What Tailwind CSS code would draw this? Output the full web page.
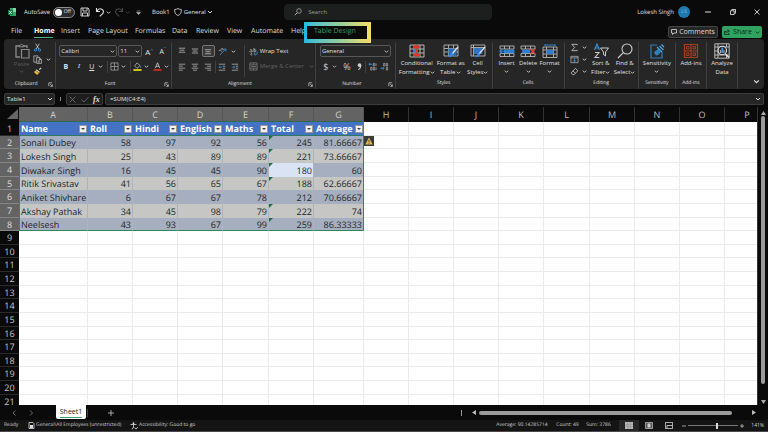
<!DOCTYPE html>
<html lang="en">

<head>
    <meta charset="UTF-8" />
    <meta name="viewport" content="width=device-width, initial-scale=1.0" />
    <title>Book1 - Excel</title>
    <script src="https://cdn.jsdelivr.net/npm/@tailwindcss/browser@4"></script>
</head>

<body class="bg-[#0a0a0a] text-[#e0e0e0] font-['Open_Sans','Noto_Sans',sans-serif] [text-rendering:geometricPrecision] text-[6px] leading-[9px] h-screen flex flex-col overflow-hidden">

    <!-- Icon sprite -->
    <svg class="hidden">
        <symbol id="caret" viewBox="0 0 6 6"><path d="M1 2l2 2 2-2" fill="none" stroke="currentColor" stroke-width="1" /></symbol>
        <symbol id="launcher" viewBox="0 0 6 6"><path d="M1 5V1h4M2.600 2.600l2.400 2.400M5.200 2.800v2.400H2.800" fill="none" stroke="currentColor" stroke-width=".8" /></symbol>
        <symbol id="save" viewBox="0 0 10 10"><path d="M1 1h7l1 1v7H1zM3 1v3h4V1M2.500 9V6h5v3" fill="none" stroke="currentColor" stroke-width=".9" /></symbol>
        <symbol id="undo" viewBox="0 0 10 10"><path d="M1.500 1v3.500H5M1.800 4.200C3 2 5 1.300 6.800 2.200c2 1 2 3.300.6 4.700L4.800 9.300" fill="none" stroke="currentColor" stroke-width="1.100" /></symbol>
        <symbol id="paste" viewBox="0 0 16 16"><path d="M6 14H2V3h3M10 3h3v2" fill="none" stroke="#8a8a8a" stroke-width="1.300" /><path d="M5 3.800V2.500h1.200C6.500.8 8.500.8 8.800 2.500H10v1.300z" fill="none" stroke="#8a8a8a" /><path d="M7.500 6.500h7.500V15H7.500z" fill="none" stroke="#8a8a8a" stroke-width="1.200" /></symbol>
        <symbol id="cut" viewBox="0 0 10 10"><path d="M3 .8l3.600 6M7 .8l-3.600 6" stroke="#d0d0d0" stroke-width=".9" /><circle cx="2.800" cy="7.800" r="1.300" fill="none" stroke="#3b93d8" /><circle cx="7.200" cy="7.800" r="1.300" fill="none" stroke="#3b93d8" /></symbol>
        <symbol id="copy" viewBox="0 0 10 10"><path d="M3.500 8H1V1h4.500v1M4 2.800h3L9.300 5v4.300H4zM7 2.800V5h2.300M5.300 6.500h2.500M5.300 7.800h2.500" fill="none" stroke="#c8c8c8" stroke-width=".8" /></symbol>
        <symbol id="painter" viewBox="0 0 10 10"><path d="M7 3l2-2" stroke="#ddd" stroke-width="1.300" /><path d="M3.500 3l3.800 3" stroke="#ddd" stroke-width="1.300" /><path d="M3 3.800L1 5.500 4.500 9l2.300-2.300z" fill="#e8b339" /></symbol>
        <symbol id="borders" viewBox="0 0 10 10"><path d="M1 1h8v8H1zM5 1v8M1 5h8" fill="none" stroke="#aaa" stroke-width=".8" /></symbol>
        <symbol id="bucket" viewBox="0 0 10 10"><path d="M4.500 1L7.800 4 4.500 7 1.800 4.300z" fill="none" stroke="#ccc" stroke-width=".8" /><path d="M8.500 4.300v2" stroke="#3b93d8" /><path d="M.500 8h9v1.800h-9z" fill="#f5ea15" /></symbol>
        <symbol id="fontcolor" viewBox="0 0 10 10"><path d="M2.500 6.800L5 .8l2.500 6M3.300 4.800h3.400" fill="none" stroke="#ccc" stroke-width=".9" /><path d="M.500 8h9v1.800h-9z" fill="#e02a1c" /></symbol>
        <symbol id="top" viewBox="0 0 10 10"><path d="M1 1.500h8M2 4h6M1 6.500h8" stroke="#bdbdbd" /></symbol>
        <symbol id="middle" viewBox="0 0 10 10"><path d="M1 2.500h8M2 5h6M1 7.500h8" stroke="#bdbdbd" /></symbol>
        <symbol id="bottom" viewBox="0 0 10 10"><path d="M1 3.500h8M2 6h6M1 8.500h8" stroke="#bdbdbd" /></symbol>
        <symbol id="left" viewBox="0 0 10 10"><path d="M1 1.500h8M1 4h5M1 6.500h8M1 9h5" stroke="#bdbdbd" stroke-width=".9" /></symbol>
        <symbol id="center" viewBox="0 0 10 10"><path d="M1 1.500h8M2.500 4h5M1 6.500h8M2.500 9h5" stroke="#bdbdbd" stroke-width=".9" /></symbol>
        <symbol id="right" viewBox="0 0 10 10"><path d="M1 1.500h8M4 4h5M1 6.500h8M4 9h5" stroke="#bdbdbd" stroke-width=".9" /></symbol>
        <symbol id="orient" viewBox="0 0 10 10"><path d="M2 9l6.500-6.500M8.800 5V2.200H6" fill="none" stroke="#3b93d8" stroke-width=".9" /><path d="M1 4.500c1-2 2.500-1 3 .5M3.500 2.500c1-1.500 2.500-.5 2 1" fill="none" stroke="#ccc" stroke-width=".9" /></symbol>
        <symbol id="outdent" viewBox="0 0 10 10"><path d="M1 1.500h8M6 4h3M6 6.500h3M1 9h8" stroke="#bdbdbd" stroke-width=".9" /><path d="M5 5.200H1.300M2.800 3.700L1.300 5.200l1.500 1.500" fill="none" stroke="#3b93d8" /></symbol>
        <symbol id="indent" viewBox="0 0 10 10"><path d="M1 1.500h8M6 4h3M6 6.500h3M1 9h8" stroke="#bdbdbd" stroke-width=".9" /><path d="M1 5.200h3.700M3.200 3.700l1.500 1.500-1.500 1.500" fill="none" stroke="#3b93d8" /></symbol>
        <symbol id="wrap" viewBox="0 0 10 10"><path d="M1 3.500c2-1.500 2.500 0 2.500 2-3 0-3 0-2.500-1M5.500 1v4.500c3 0 3-3 0-2.500M3.500 7.500C1.500 6.800 1 9 3.500 9" fill="none" stroke="#ccc" stroke-width=".8" /><path d="M9 5v3H5.500M7 6.500L5.500 8 7 9.500" fill="none" stroke="#3b93d8" stroke-width=".9" /></symbol>
        <symbol id="merge" viewBox="0 0 10 10"><path d="M1 1h8v8H1zM1 3.200h8M1 6.800h8M5 1v2M5 7v2M2.500 5h5" fill="none" stroke="#7a7a7a" stroke-width=".9" /></symbol>
        <symbol id="comma" viewBox="0 0 10 10"><circle cx="5" cy="3.500" r="2" fill="#ccc" /><path d="M6.300 3.500C6.500 6 5.500 7.500 3.800 8.500" fill="none" stroke="#ccc" stroke-width="1.300" /></symbol>
        <symbol id="decmore" viewBox="0 0 10 10"><path d="M5 2.500H1M2.500 1L1 2.500 2.500 4" fill="none" stroke="#3b93d8" /><path d="M6 1.500h1.500v3H6zM3 6h1.500v3H3zM6 6h1.500v3H6zM9 1.500v3M9 6v3" fill="none" stroke="#aaa" stroke-width=".8" /></symbol>
        <symbol id="decless" viewBox="0 0 10 10"><path d="M.500 7h4M3 5.500L4.500 7 3 8.500" fill="none" stroke="#3b93d8" /><path d="M4 1.500h1.500v3H4zM7 1.500h1.500v3H7zM7 6h1.500v3H7z" fill="none" stroke="#aaa" stroke-width=".8" /></symbol>
        <symbol id="cond" viewBox="0 0 16 14"><path d="M1 1h14v12H1zM1 5h14M1 9h14M5 1v12M11 1v12" fill="none" stroke="#c4c4c4" stroke-width=".9" /><path d="M4 1.500h6v3H4zM4 9.500h7v3H4z" fill="#e0352b" /><path d="M4 5.500h3v3H4z" fill="#2f7fd0" /><path d="M7 5.500h2v3H7z" fill="#e0352b" /></symbol>
        <symbol id="fmttable" viewBox="0 0 16 14"><path d="M1 1h14v11H1zM1 4.500h14M1 8h14M5.500 1v11M10.500 1v11" fill="none" stroke="#b5b5b5" stroke-width=".9" /><path d="M5.500 4.500h8v7h-8z" fill="#2b6cb8" /><path d="M15 3l-6 7" stroke="#e0e0e0" stroke-width="1.300" /><path d="M9 9c-2 0-2 3-4 4 3 .5 5-.5 5-3z" fill="#2f8be0" /></symbol>
        <symbol id="cellstyle" viewBox="0 0 16 14"><path d="M1 1h14v11H1zM1 3.500h14M3.500 1v11" fill="none" stroke="#b5b5b5" stroke-width=".9" /><path d="M3.800 4h8.500v6H3.800z" fill="#2f74c4" /><path d="M15 3l-6 7" stroke="#e0e0e0" stroke-width="1.300" /><path d="M9 9c-2 0-2 3-4 4 3 .5 5-.5 5-3z" fill="#2f8be0" /></symbol>
        <symbol id="insert" viewBox="0 0 16 14"><path d="M1 2h14v3H1zM1 9.500h14v3H1zM5.500 2v3M10.500 2v3M5.500 9.500v3M10.500 9.500v3" fill="none" stroke="#b5b5b5" stroke-width=".9" /><path d="M5 5.700h10.500v3.500H5z" fill="#2f7fd0" /><path d="M6 7.300H.800M3 5.200L.800 7.300 3 9.400" fill="none" stroke="#2f8be0" stroke-width="1.100" /></symbol>
        <symbol id="delete" viewBox="0 0 16 14"><path d="M1 2h14v3H1zM1 9.500h14v3H1zM5.500 2v3M10.500 2v3M5.500 9.500v3M10.500 9.500v3" fill="none" stroke="#b5b5b5" stroke-width=".9" /><path d="M2 5.700h8v3.500H2z" fill="#2f7fd0" /><path d="M10.500 5l4.500 5M15 5l-4.500 5" stroke="#e04a3a" stroke-width="1.300" /></symbol>
        <symbol id="format" viewBox="0 0 16 14"><path d="M3 1h10M3 0v2M13 0v2" stroke="#2f8be0" stroke-width=".9" /><path d="M1 3h14v10.500H1zM1 6h14M1 10h14M4.500 3v10.500M11.500 3v10.500" fill="none" stroke="#b5b5b5" stroke-width=".9" /><path d="M4.500 6h7v4h-7z" fill="#2f7fd0" /></symbol>
        <symbol id="sum" viewBox="0 0 10 10"><path d="M8 2.500V1.500H2L5.200 5 2 8.500h6v-1" fill="none" stroke="#ccc" stroke-width=".9" /></symbol>
        <symbol id="fill" viewBox="0 0 10 10"><path d="M1 1.500h8v7H1zM1 3.200h8" fill="none" stroke="#bbb" stroke-width=".8" /><path d="M5 4v3.500M3.500 6L5 7.500 6.500 6" fill="none" stroke="#3b93d8" /></symbol>
        <symbol id="clear" viewBox="0 0 10 10"><path d="M6 1.500l2.700 2.700L4.500 8.500H3L1.300 6.500zM3.200 4.300L6 7" fill="none" stroke="#ccc" stroke-width=".9" /></symbol>
        <symbol id="sort" viewBox="0 0 16 16"><path d="M1.500 7L4 1l2.500 6M2.300 5h3.400" fill="none" stroke="#3b93d8" stroke-width="1.100" /><path d="M2 9.500h4l-4 5h4.300" fill="none" stroke="#ccc" stroke-width="1.100" /><path d="M7.500 5h8l-3 4v4l-2-1.500V9z" fill="none" stroke="#ccc" /></symbol>
        <symbol id="find" viewBox="0 0 16 16"><circle cx="10" cy="6" r="5" fill="none" stroke="#ccc" stroke-width="1.100" /><path d="M6.300 9.700L1 15" stroke="#ccc" stroke-width="1.200" /></symbol>
        <symbol id="sens" viewBox="0 0 16 16"><path d="M8 2H2v13h11V9" fill="none" stroke="#2f7fb8" stroke-width="1.200" /><path d="M5 9l4-3 3 3-3 3c-2 1-3 0-4-3z" fill="#2f7fb8" /><path d="M8 4l5 5M10.500 3l4 4M12.500 1.500l2.500 2.500" stroke="#4ba3e0" stroke-width="1.300" /></symbol>
        <symbol id="addins" viewBox="0 0 16 16"><path d="M1.500 1.500h13v13h-13zM8 1.500v13M1.500 8h13" fill="none" stroke="#a03f24" stroke-width="1.200" /><path d="M3.500 3.500H6V6H3.500zM10 3.500h2.500V6H10zM3.500 10H6v2.500H3.500zM10 10h2.500v2.500H10z" fill="none" stroke="#a03f24" /></symbol>
        <symbol id="analyze" viewBox="0 0 16 16"><path d="M.800.800h14.400v14.400H.800zM.800 4h14.400M4 .800V15M.800 8h3M.800 12h14M12.500 1v3M12.500 12v3" fill="none" stroke="#c8c8c8" stroke-width=".9" /><circle cx="8.300" cy="7.500" r="4.200" fill="#262626" stroke="#e8e8e8" stroke-width="1.100" /><path d="M6.500 10V7M10 10V7" stroke="#aaa" stroke-width="1.100" /><path d="M8.300 10V4.500" stroke="#3b93f0" stroke-width="1.800" /><path d="M11.500 11l3.500 3.500" stroke="#e8e8e8" stroke-width="1.300" /></symbol>
    </svg>

    <!-- Title bar -->
    <header class="h-6 shrink-0 flex items-center px-2 relative">
        <svg class="w-2 h-2" viewBox="0 0 8 8"><path d="M2 0h6v8H2z" fill="#2fa866" /><path d="M5 0h3v4H5z" fill="#7fd6a5" /><path d="M0 2h5v5H0z" fill="#107c41" /><path d="M1.300 3l2.400 3M3.700 3L1.300 6" stroke="#fff" stroke-width=".8" /></svg>
        <label for="autosave" class="ml-2 w-7">AutoSave</label>
        <span class="relative w-[22px] h-[11px] ml-px flex items-center">
            <input id="autosave" type="checkbox" class="appearance-none w-full h-full rounded-full border border-[#8f8f8f] bg-[#2c2c2c]" />
            <span class="absolute left-[2px] w-[7px] h-[7px] rounded-full bg-white pointer-events-none"></span>
            <span class="absolute right-[4px] text-[5px] pointer-events-none">Off</span>
        </span>
        <button class="ml-[5px] w-[11px] h-[10px]" aria-label="Save"><svg class="w-[10px] h-[10px]"><use href="#save" /></svg></button>
        <button class="ml-1 flex items-center gap-px" aria-label="Undo"><svg class="w-[10px] h-[10px]"><use href="#undo" /></svg><svg class="w-[5px] h-[5px]"><use href="#caret" /></svg></button>
        <button class="ml-[3px] flex items-center gap-px text-[#484848]" aria-label="Redo"><svg class="w-[10px] h-[10px] -scale-x-100"><use href="#undo" /></svg><svg class="w-[5px] h-[5px]"><use href="#caret" /></svg></button>
        <button class="ml-[6px]" aria-label="Customize toolbar"><svg class="w-[5px] h-[5px]" viewBox="0 0 5 5"><path d="M.500 1h4M.500 2.500h4L2.500 4.500z" fill="#bbb" stroke="#bbb" stroke-width=".5" /></svg></button>
        <span class="ml-[11px]">Book1</span>
        <button class="ml-1 flex items-center">
            <svg class="w-2 h-2 mr-[2px]" viewBox="0 0 8 8"><path d="M4 .5C5 1.200 6 1.500 7.300 1.500c.2 3-.6 5-3.300 6C1.300 6.500.500 4.500.700 1.500 2 1.500 3 1.200 4 .5z" fill="none" stroke="#ccc" stroke-width=".9" /></svg>
            General
            <svg class="w-[6px] h-[6px] ml-px"><use href="#caret" /></svg>
        </button>
        <div class="absolute left-[37%] w-[27%] h-4 top-1 bg-[#1c1f1e] rounded-sm flex items-center pl-[10px]">
            <svg class="w-2 h-2 mr-[6px]" viewBox="0 0 8 8"><circle cx="5" cy="3" r="2.300" fill="none" stroke="#aaa" stroke-width=".8" /><path d="M3.300 4.700L.800 7.200" stroke="#aaa" /></svg>
            <input type="search" placeholder="Search" aria-label="Search" class="bg-transparent flex-1 text-[6px] placeholder:text-[#9d9d9d]" />
        </div>
        <span class="ml-auto">Lokesh Singh</span>
        <span class="ml-1 w-3 h-3 rounded-full bg-[#1f78ad] text-[#8cc4ea] text-[5px] flex items-center justify-center">LS</span>
        <button class="ml-[15px] w-[7px]" aria-label="Minimize"><svg class="w-[6px] h-[6px]" viewBox="0 0 6 6"><path d="M0 3h6" stroke="#ddd" /></svg></button>
        <button class="ml-[18px]" aria-label="Restore"><svg class="w-[6px] h-[6px]" viewBox="0 0 6 6"><path d="M.500 1.800h3.700v3.700H.500zM1.800 1.500V.500h3.700v3.700h-1" fill="none" stroke="#ddd" stroke-width=".9" /></svg></button>
        <button class="ml-[18px]" aria-label="Close"><svg class="w-[6px] h-[6px]" viewBox="0 0 6 6"><path d="M.500.500l5 5M5.500.500l-5 5" stroke="#ddd" stroke-width=".9" /></svg></button>
    </header>

    <!-- Ribbon tabs -->
    <nav class="h-[15px] shrink-0 flex pl-[11px] pr-[5px] pt-[3px] relative text-[#dcdcdc] text-[7px] leading-[10px] whitespace-nowrap">
        <a href="#" class="w-[23px]">File</a>
        <a href="#" class="w-[19px] mr-2 h-[11px] font-bold text-white border-b border-[#4fb583]">Home</a>
        <a href="#" class="w-[27px]">Insert</a>
        <a href="#" class="w-[47px]">Page Layout</a>
        <a href="#" class="w-[37px]">Formulas</a>
        <a href="#" class="w-6">Data</a>
        <a href="#" class="w-[31px]">Review</a>
        <a href="#" class="w-6">View</a>
        <a href="#" class="w-10">Automate</a>
        <a href="#" class="w-[23px]">Help</a>
        <a href="#" class="text-[#3d9c67]">Table Design</a>
        <!-- highlight frame -->
        <div class="absolute z-10 left-[304px] -top-[2px] w-[67px] h-[21px] pointer-events-none flex flex-col">
            <div class="h-1 bg-linear-to-r from-[#1fbbdc] via-[#8dcca0] to-[#f4dc5e]"></div>
            <div class="flex-1 border-l-[3px] border-r-4 border-l-[#1fbbdc] border-r-[#f4dc5e]"></div>
            <div class="h-1 bg-linear-to-r from-[#1fbbdc] via-[#8dcca0] to-[#f4dc5e]"></div>
        </div>
        <div class="ml-auto flex gap-1 -mt-px">
            <button class="w-[50px] h-3 rounded-xs border border-[#444] bg-[#262626] flex items-center justify-center gap-[2px]">
                <svg class="w-[6px] h-[6px]" viewBox="0 0 6 6"><path d="M.500.500h5v3.500H3L1.500 5.500V4h-1z" fill="none" stroke="#ddd" stroke-width=".8" /></svg>Comments
            </button>
            <button class="w-10 h-3 rounded-xs bg-[#2fa35f] text-[#0b2a18] flex items-center justify-center gap-[3px] mr-px">
                <svg class="w-[6px] h-[6px]" viewBox="0 0 6 6"><path d="M2 2.500H.500v3h4.500V4M2 4c0-1.500 1-2 2.500-2M3.500.500L5.500 2 3.500 3.500" fill="none" stroke="currentColor" stroke-width=".8" /></svg>Share
                <svg class="w-[5px] h-[5px]"><use href="#caret" /></svg>
            </button>
        </div>
    </nav>

    <!-- Ribbon -->
    <section class="h-[50px] shrink-0 mx-1 rounded bg-[#262626] flex pt-[3px] whitespace-nowrap">
        <!-- Clipboard -->
        <div class="flex-52 min-w-0 border-r border-[#404040] flex flex-col">
            <div class="flex-1 flex pl-[9px] pt-px">
                <button class="w-[17px] flex flex-col items-center text-[#5c5c5c]"><svg class="w-4 h-4"><use href="#paste" /></svg><span class="mt-px">Paste</span><svg class="w-[5px] h-[5px]"><use href="#caret" /></svg></button>
                <div class="ml-[3px] flex flex-col gap-[3px]">
                    <button aria-label="Cut"><svg class="w-[9px] h-[9px]"><use href="#cut" /></svg></button>
                    <button class="flex items-center gap-1" aria-label="Copy"><svg class="w-[9px] h-[9px]"><use href="#copy" /></svg><svg class="w-[5px] h-[5px]"><use href="#caret" /></svg></button>
                    <button aria-label="Format Painter"><svg class="w-[9px] h-[9px]"><use href="#painter" /></svg></button>
                </div>
            </div>
            <div class="h-[10px] flex items-center pr-[2px] text-[5px]"><span class="flex-1 text-center">Clipboard</span><svg class="w-[5px] h-[5px]"><use href="#launcher" /></svg></div>
        </div>
        <!-- Font -->
        <div class="flex-116 min-w-0 border-r border-[#404040] flex flex-col">
            <div class="flex-1 flex flex-col pl-[3px] pt-[3px] gap-[3px]">
                <div class="flex items-center h-3">
                    <div class="relative w-[58px]"><select aria-label="Font" class="appearance-none w-full h-3 border border-[#575757] rounded-xs px-px leading-[9px]"><option>Calibri</option></select><svg class="absolute right-[2px] top-1 w-[5px] h-[5px] pointer-events-none"><use href="#caret" /></svg></div>
                    <div class="relative w-6 ml-px"><select aria-label="Font size" class="appearance-none w-full h-3 border border-[#575757] rounded-xs px-px leading-[9px]"><option>11</option></select><svg class="absolute right-[2px] top-1 w-[5px] h-[5px] pointer-events-none"><use href="#caret" /></svg></div>
                    <button class="w-[14px] text-[8px]" aria-label="Grow font">A<sup class="text-[5px] text-[#3b93d8]">^</sup></button>
                    <button class="w-[13px] text-[7px]" aria-label="Shrink font">A<sup class="text-[5px] text-[#3b93d8]">ˇ</sup></button>
                </div>
                <div class="flex items-center h-[13px] text-[7px]">
                    <button class="w-[13px] font-bold">B</button>
                    <button class="w-[13px] italic font-['Liberation_Serif',serif]">I</button>
                    <button class="w-[13px] underline">U</button>
                    <svg class="w-[5px] h-[5px] mr-1"><use href="#caret" /></svg>
                    <span class="w-px h-3 bg-[#404040]"></span>
                    <button class="w-[13px] flex justify-center" aria-label="Borders"><svg class="w-[9px] h-[9px]"><use href="#borders" /></svg></button>
                    <svg class="w-[5px] h-[5px] mr-1"><use href="#caret" /></svg>
                    <span class="w-px h-3 bg-[#404040]"></span>
                    <button class="w-[13px] flex justify-center" aria-label="Fill color"><svg class="w-[9px] h-[9px]"><use href="#bucket" /></svg></button>
                    <svg class="w-[5px] h-[5px] mr-[2px]"><use href="#caret" /></svg>
                    <button class="w-[13px] flex justify-center" aria-label="Font color"><svg class="w-[9px] h-[9px]"><use href="#fontcolor" /></svg></button>
                    <svg class="w-[5px] h-[5px]"><use href="#caret" /></svg>
                </div>
            </div>
            <div class="h-[10px] flex items-center pr-[2px] text-[5px]"><span class="flex-1 text-center">Font</span><svg class="w-[5px] h-[5px]"><use href="#launcher" /></svg></div>
        </div>
        <!-- Alignment -->
        <div class="flex-145 min-w-0 border-r border-[#404040] flex flex-col">
            <div class="flex-1 flex pl-1 pt-[3px]">
                <div class="w-[68px] flex flex-col gap-[3px]">
                    <div class="flex items-center h-3">
                        <button class="w-[13px] flex justify-center" aria-label="Top align"><svg class="w-2 h-2"><use href="#top" /></svg></button>
                        <button class="w-[13px] flex justify-center" aria-label="Middle align"><svg class="w-2 h-2"><use href="#middle" /></svg></button>
                        <button class="w-[13px] h-3 flex items-center justify-center border border-[#777] bg-[#363636] rounded-xs" aria-label="Bottom align"><svg class="w-2 h-2"><use href="#bottom" /></svg></button>
                        <button class="w-4 flex justify-center" aria-label="Orientation"><svg class="w-[9px] h-[9px]"><use href="#orient" /></svg></button>
                        <svg class="w-[5px] h-[5px]"><use href="#caret" /></svg>
                    </div>
                    <div class="flex items-center h-[13px]">
                        <button class="w-[13px] flex justify-center" aria-label="Align left"><svg class="w-2 h-2"><use href="#left" /></svg></button>
                        <button class="w-[13px] flex justify-center" aria-label="Center"><svg class="w-2 h-2"><use href="#center" /></svg></button>
                        <button class="w-[13px] flex justify-center" aria-label="Align right"><svg class="w-2 h-2"><use href="#right" /></svg></button>
                        <span class="w-px h-3 bg-[#404040]"></span>
                        <button class="w-[13px] flex justify-center" aria-label="Decrease indent"><svg class="w-2 h-2"><use href="#outdent" /></svg></button>
                        <button class="w-[13px] flex justify-center" aria-label="Increase indent"><svg class="w-2 h-2"><use href="#indent" /></svg></button>
                    </div>
                </div>
                <span class="w-px h-8 bg-[#404040]"></span>
                <div class="flex flex-col gap-[3px] pl-1">
                    <button class="h-3 flex items-center gap-[2px]"><svg class="w-[9px] h-[9px]"><use href="#wrap" /></svg>Wrap Text</button>
                    <button class="h-[13px] flex items-center gap-[2px] text-[#626262]"><svg class="w-[9px] h-[9px]"><use href="#merge" /></svg>Merge &amp; Center<svg class="w-[5px] h-[5px] ml-[3px]"><use href="#caret" /></svg></button>
                </div>
            </div>
            <div class="h-[10px] flex items-center pr-[2px] text-[5px]"><span class="flex-1 text-center">Alignment</span><svg class="w-[5px] h-[5px]"><use href="#launcher" /></svg></div>
        </div>
        <!-- Number -->
        <div class="flex-80 min-w-0 border-r border-[#404040] flex flex-col">
            <div class="flex-1 flex flex-col px-1 pt-[3px] gap-[3px]">
                <div class="relative h-3"><select aria-label="Number format" class="appearance-none w-full h-3 border border-[#575757] rounded-xs px-px leading-[9px]"><option>General</option></select><svg class="absolute right-[2px] top-1 w-[5px] h-[5px] pointer-events-none"><use href="#caret" /></svg></div>
                <div class="flex items-center h-[13px] text-[9px] text-[#c8c8c8]">
                    <button class="w-3">$</button>
                    <svg class="w-[5px] h-[5px] mr-1"><use href="#caret" /></svg>
                    <button class="w-[13px]">%</button>
                    <button class="w-3 flex justify-center" aria-label="Comma style"><svg class="w-[9px] h-[9px]"><use href="#comma" /></svg></button>
                    <span class="w-px h-3 bg-[#404040]"></span>
                    <button class="w-[13px] flex justify-center" aria-label="Increase decimal"><svg class="w-[9px] h-[9px]"><use href="#decmore" /></svg></button>
                    <button class="w-3 flex justify-center" aria-label="Decrease decimal"><svg class="w-[9px] h-[9px]"><use href="#decless" /></svg></button>
                </div>
            </div>
            <div class="h-[10px] flex items-center pr-[2px] text-[5px]"><span class="flex-1 text-center">Number</span><svg class="w-[5px] h-[5px]"><use href="#launcher" /></svg></div>
        </div>
        <!-- Styles -->
        <div class="flex-97 min-w-0 border-r border-[#404040] flex flex-col">
            <div class="flex-1 flex justify-center pt-[2px]">
                <button class="w-9 flex flex-col items-center"><svg class="w-4 h-[14px] mb-px"><use href="#cond" /></svg><span>Conditional</span><span class="flex items-center">Formatting<svg class="w-[5px] h-[5px]"><use href="#caret" /></svg></span></button>
                <button class="w-8 flex flex-col items-center"><svg class="w-4 h-[14px] mb-px"><use href="#fmttable" /></svg><span>Format as</span><span class="flex items-center">Table<svg class="w-[5px] h-[5px] ml-px"><use href="#caret" /></svg></span></button>
                <button class="w-[22px] flex flex-col items-center"><svg class="w-4 h-[14px] mb-px"><use href="#cellstyle" /></svg><span>Cell</span><span class="flex items-center">Styles<svg class="w-[5px] h-[5px]"><use href="#caret" /></svg></span></button>
            </div>
            <div class="h-[10px] text-[5px] text-center">Styles</div>
        </div>
        <!-- Cells -->
        <div class="flex-72 min-w-0 border-r border-[#404040] flex flex-col">
            <div class="flex-1 flex justify-center pt-[2px]">
                <button class="w-[21px] flex flex-col items-center"><svg class="w-4 h-[14px] mb-px"><use href="#insert" /></svg><span>Insert</span><svg class="w-[5px] h-[5px] mt-px"><use href="#caret" /></svg></button>
                <button class="w-[22px] flex flex-col items-center"><svg class="w-4 h-[14px] mb-px"><use href="#delete" /></svg><span>Delete</span><svg class="w-[5px] h-[5px] mt-px"><use href="#caret" /></svg></button>
                <button class="w-[21px] flex flex-col items-center"><svg class="w-4 h-[14px] mb-px"><use href="#format" /></svg><span>Format</span><svg class="w-[5px] h-[5px] mt-px"><use href="#caret" /></svg></button>
            </div>
            <div class="h-[10px] text-[5px] text-center">Cells</div>
        </div>
        <!-- Editing -->
        <div class="flex-74 min-w-0 border-r border-[#404040] flex flex-col">
            <div class="flex-1 flex pl-[5px] pt-px">
                <div class="flex flex-col gap-[3px] w-[19px]">
                    <button class="flex items-center gap-[3px]" aria-label="AutoSum"><svg class="w-[9px] h-[9px]"><use href="#sum" /></svg><svg class="w-[5px] h-[5px]"><use href="#caret" /></svg></button>
                    <button class="flex items-center gap-[3px]" aria-label="Fill"><svg class="w-[9px] h-[9px]"><use href="#fill" /></svg><svg class="w-[5px] h-[5px]"><use href="#caret" /></svg></button>
                    <button class="flex items-center gap-[3px]" aria-label="Clear"><svg class="w-[9px] h-[9px]"><use href="#clear" /></svg><svg class="w-[5px] h-[5px]"><use href="#caret" /></svg></button>
                </div>
                <button class="w-6 flex flex-col items-center"><svg class="w-4 h-4"><use href="#sort" /></svg><span>Sort &amp;</span><span class="flex items-center">Filter<svg class="w-[5px] h-[5px]"><use href="#caret" /></svg></span></button>
                <button class="w-6 flex flex-col items-center"><svg class="w-4 h-4"><use href="#find" /></svg><span>Find &amp;</span><span class="flex items-center">Select<svg class="w-[5px] h-[5px]"><use href="#caret" /></svg></span></button>
            </div>
            <div class="h-[10px] text-[5px] text-center">Editing</div>
        </div>
        <!-- Sensitivity -->
        <div class="flex-37 min-w-0 border-r border-[#404040] flex flex-col">
            <button class="flex-1 flex flex-col items-center pt-px"><svg class="w-4 h-4"><use href="#sens" /></svg><span>Sensitivity</span><svg class="w-[5px] h-[5px] mt-px"><use href="#caret" /></svg></button>
            <div class="h-[10px] text-[5px] text-center">Sensitivity</div>
        </div>
        <!-- Add-ins -->
        <div class="flex-30 min-w-0 border-r border-[#404040] flex flex-col">
            <button class="flex-1 flex flex-col items-center pt-px"><svg class="w-4 h-4"><use href="#addins" /></svg><span>Add-ins</span></button>
            <div class="h-[10px] text-[5px] text-center">Add-ins</div>
        </div>
        <!-- Analyze -->
        <div class="flex-31 min-w-0 border-r border-[#404040] flex flex-col">
            <button class="flex-1 flex flex-col items-center pt-px"><svg class="w-4 h-4"><use href="#analyze" /></svg><span>Analyze</span><span>Data</span></button>
        </div>
        <div class="flex-26 min-w-0 flex items-end justify-end">
            <button class="mr-1 mb-1" aria-label="Collapse ribbon"><svg class="w-[7px] h-[7px]"><use href="#caret" /></svg></button>
        </div>
    </section>

    <!-- Formula bar -->
    <section class="h-3 shrink-0 mt-1 mb-[2px] mx-1 flex items-stretch">
        <div class="relative w-[51px]"><input aria-label="Name box" value="Table1" class="w-full h-3 border border-[#3c3c3c] bg-[#262626] rounded-xs px-[2px]" /><svg class="absolute right-[2px] top-[3px] w-[6px] h-[6px]"><use href="#caret" /></svg></div>
        <span class="w-px mx-[5px] my-1 bg-[#888]"></span>
        <div class="w-[37px] border border-[#3c3c3c] bg-[#1d1d1d] rounded-xs flex items-center justify-around">
            <button aria-label="Cancel"><svg class="w-[7px] h-[7px]" viewBox="0 0 6 6"><path d="M.500.500l5 5M5.500.500l-5 5" stroke="#777" stroke-width=".7" /></svg></button>
            <button aria-label="Enter"><svg class="w-2 h-[7px]" viewBox="0 0 8 6"><path d="M.500 3l2.500 2.500L7.500.500" fill="none" stroke="#777" stroke-width=".7" /></svg></button>
            <button class="italic font-bold text-[8px] font-['Liberation_Serif',serif]">fx</button>
        </div>
        <div class="relative flex-1 ml-[2px]"><input aria-label="Formula" value="=SUM(C4:E4)" class="w-full h-3 border border-[#3c3c3c] bg-[#262626] rounded-xs px-1" /><svg class="absolute right-[3px] top-[3px] w-[6px] h-[6px]"><use href="#caret" /></svg></div>
    </section>

    <!-- Sheet -->
    <main class="flex-1 min-h-0 flex">
        <div class="flex-1 min-w-0 overflow-hidden bg-white">
            <table class="table-fixed w-[770px] border-separate border-spacing-0 text-[9px] leading-[11px] text-[#22262c]">
                <colgroup>
                    <col class="w-[19px]" /><col class="w-[69px]" /><col class="w-[45px]" /><col class="w-[45px]" /><col class="w-[45px]" /><col class="w-[46px]" /><col class="w-[45px]" /><col class="w-[50px]" />
                    <col class="w-[45px]" /><col class="w-[45px]" /><col class="w-[45px]" /><col class="w-[45px]" /><col class="w-[46px]" /><col class="w-[45px]" /><col class="w-[45px]" /><col class="w-[45px]" /><col class="w-[45px]" />
                </colgroup>
                <thead>
                    <tr id="colHeads" class="h-[15px]">
                        <th class="bg-[#0a0a0a] p-0"><svg class="w-[11px] h-[11px] ml-[7px]" viewBox="0 0 11 11"><path d="M11 0v10H0z" fill="#666" /></svg></th>
                    </tr>
                </thead>
                <tbody id="rows"></tbody>
            </table>
        </div>
        <!-- vertical scrollbar -->
        <div class="w-[11px] bg-[#0a0a0a] flex flex-col items-center pt-1 border-l border-[#333]">
            <svg class="w-[5px] h-[4px]" viewBox="0 0 5 4"><path d="M0 4L2.500 0 5 4z" fill="#aaa" /></svg>
            <div class="mt-px flex-1 w-1 mb-4 rounded-full bg-[#9b9b9b]"></div>
            <svg class="w-[5px] h-[4px] mb-[1px]" viewBox="0 0 5 4"><path d="M0 0l2.500 4L5 0z" fill="#aaa" /></svg>
        </div>
    </main>

    <!-- Sheet tabs -->
    <section class="h-[15px] shrink-0 flex items-center pr-3">
        <button class="ml-3" aria-label="Previous sheet"><svg class="w-[5px] h-[6px]" viewBox="0 0 5 6"><path d="M3.500.500L1 3l2.500 2.500" fill="none" stroke="#888" stroke-width=".8" /></svg></button>
        <button class="ml-3" aria-label="Next sheet"><svg class="w-[5px] h-[6px]" viewBox="0 0 5 6"><path d="M1 .500L3.500 3 1 5.500" fill="none" stroke="#888" stroke-width=".8" /></svg></button>
        <button class="ml-[22px] w-[30px] h-[14px] self-start bg-white rounded-b-xs text-[#222] text-[7px] flex justify-center"><span class="h-[13px] pt-[2px] border-b border-[#3c9b6a]">Sheet1</span></button>
        <span class="w-px h-2 ml-px bg-[#444]"></span>
        <button class="ml-5" aria-label="New sheet"><svg class="w-[6px] h-[6px]" viewBox="0 0 6 6"><path d="M3 0v6M0 3h6" stroke="#ccc" stroke-width=".8" /></svg></button>
        <!-- horizontal scrollbar -->
        <div class="ml-auto w-[39%] flex items-center">
            <span class="w-px h-[6px] bg-[#999] mr-[10px]"></span>
            <svg class="w-1 h-[5px]" viewBox="0 0 4 5"><path d="M4 0L0 2.500 4 5z" fill="#bbb" /></svg>
            <div class="ml-[3px] h-1 flex-1 mr-5 rounded-full bg-[#9b9b9b]"></div>
            <svg class="w-1 h-[5px]" viewBox="0 0 4 5"><path d="M0 0l4 2.500L0 5z" fill="#bbb" /></svg>
        </div>
    </section>

    <!-- Status bar -->
    <footer class="h-3 shrink-0 flex items-center pl-1 pr-1 bg-[#141414] border-b border-[#4a4a4a] text-[5px] text-[#d0d0d0] whitespace-nowrap">
        <span class="w-6">Ready</span>
        <svg class="w-[7px] h-[7px] mr-px" viewBox="0 0 7 7"><path d="M1 .500h4l1 1v5H1z" fill="none" stroke="#ddd" stroke-width=".8" /><path d="M2 3h3v3H2z" fill="#ddd" /></svg>
        <span class="w-[94px]">General\All Employees (unrestricted)</span>
        <svg class="w-2 h-2 mr-px" viewBox="0 0 8 8"><circle cx="3.500" cy="1.200" r=".9" fill="#ddd" /><path d="M.500 2.500h6M3.500 2.500V5L2 7.500M3.500 5l1 1M5 6l1 1.200L7.800 5" fill="none" stroke="#ddd" stroke-width=".8" /></svg>
        <span>Accessibility: Good to go</span>
        <span class="ml-auto w-[60px]">Average: 90.14285714</span>
        <span class="w-[30px]">Count: 49</span>
        <span class="w-[33px]">Sum: 3786</span>
        <button class="w-5 h-[11px] bg-[#262626] flex items-center justify-center" aria-label="Normal view"><svg class="w-2 h-[7px]" viewBox="0 0 8 7"><path d="M0 0h8v7H0z" fill="#bbb" /><path d="M0 2.300h8M0 4.600h8M2.700 0v7M5.300 0v7" stroke="#777" stroke-width=".4" /></svg></button>
        <button class="w-5 flex justify-center" aria-label="Page layout view"><svg class="w-2 h-[7px]" viewBox="0 0 8 7"><path d="M.400.400h7.200v6.200H.400z" fill="#555" stroke="#bbb" stroke-width=".8" /><path d="M2.500 1.500h3v4h-3z" fill="#ccc" /></svg></button>
        <button class="w-5 flex justify-center" aria-label="Page break view"><svg class="w-2 h-[7px]" viewBox="0 0 8 7"><path d="M.400.400h7.200v6.200H.400zM2 6V3.500h5.500" fill="none" stroke="#ccc" stroke-width=".9" /></svg></button>
        <button class="ml-[3px]" aria-label="Zoom out"><svg class="w-1 h-1" viewBox="0 0 4 4"><path d="M0 2h4" stroke="#bbb" stroke-width=".8" /></svg></button>
        <input type="range" min="10" max="400" value="235" aria-label="Zoom" class="appearance-none w-[50px] h-px mx-[2px] bg-[#777] [&::-webkit-slider-thumb]:appearance-none [&::-webkit-slider-thumb]:w-[2px] [&::-webkit-slider-thumb]:h-[6px] [&::-webkit-slider-thumb]:bg-[#ddd]" />
        <button class="mr-[7px]" aria-label="Zoom in"><svg class="w-1 h-1" viewBox="0 0 4 4"><path d="M0 2h4M2 0v4" stroke="#bbb" stroke-width=".8" /></svg></button>
        <button>141%</button>
    </footer>

    <script>
        const columns = 'ABCDEFGHIJKLMNOP'.split('');
        const fields = ['Name', 'Roll', 'Hindi', 'English', 'Maths', 'Total', 'Average'];
        const data = [
            ['Sonali Dubey', 58, 97, 92, 56, 245, 81.66667],
            ['Lokesh Singh', 25, 43, 89, 89, 221, 73.66667],
            ['Diwakar Singh', 16, 45, 45, 90, 180, 60],
            ['Ritik Srivastav', 41, 56, 65, 67, 188, 62.66667],
            ['Aniket Shivhare', 6, 67, 67, 78, 212, 70.66667],
            ['Akshay Pathak', 34, 45, 98, 79, 222, 74],
            ['Neelsesh', 43, 93, 67, 99, 259, 86.33333]
        ];
        // every row but Aniket's has an error mark on its total
        const unflagged = 6;

        document.getElementById('colHeads').innerHTML += columns.map((c, i) => i < 7
            ? `<th class="p-0 font-normal bg-[#636363] text-[#d2d2d2] border-r border-[#555] border-b border-b-[#2f6b4b]">${c}</th>`
            : `<th class="p-0 font-normal bg-[#0a0a0a] text-[#bdbdbd] border-r border-[#333]">${c}</th>`
        ).join('');

        function rowHead(n) {
            const look = n > 1 && n < 9 ? 'bg-[#636363] text-[#dedede] border-b-[#858585]' : 'bg-[#0a0a0a] text-[#c4c4c4] border-b-[#2a2a2a]';
            return `<th class="p-0 font-normal border-b ${look}">${n}</th>`;
        }

        function headCell(name) {
            return `<td class="p-0 bg-[#4472c4] border-b border-[#2f7a5a]"><div class="flex items-center justify-between pl-[2px] pr-px text-white font-bold">${name}<button class="w-2 h-2 bg-[#f0f0f0] border border-[#999] flex items-center justify-center" aria-label="Filter ${name}"><svg class="w-1 h-1" viewBox="0 0 4 4"><path d="M0 1h4L2 3z" fill="#444"/></svg></button></div></td>`;
        }

        function dataCell(value, n, i) {
            const band = n === 4 && i === 5 ? 'bg-[#d9e3f4]' : n % 2 ? 'bg-[#c6c6c5]' : 'bg-[#a6afbf]';
            const right = i === 6 ? 'border-r border-r-[#2f8a5b]' : 'border-r border-r-[#aeb3bb]';
            const bottom = n === 8 ? 'border-b border-b-[#2f8a5b]' : '';
            const left = i === 0 ? 'border-l border-l-[#2f8a5b] text-left' : 'text-right';
            let extra = '';
            if (i === 5 && n !== unflagged) extra += '<span class="absolute left-0 top-0 border-t-4 border-r-4 border-t-[#1d6b41] border-r-transparent"></span>';
            if (i === 6 && n === 2) extra += '<button class="absolute left-full top-0 ml-px w-[10px] h-[10px] bg-[#3a3a3a] flex items-center justify-center" aria-label="Error options"><svg class="w-2 h-2" viewBox="0 0 8 8"><path d="M4 .5L7.700 7.500H.300z" fill="#e8b850"/><path d="M4 3v2.300M4 6v.8" stroke="#333" stroke-width=".9"/></svg></button>';
            return `<td class="relative py-0 px-px whitespace-nowrap ${band} ${right} ${bottom} ${left}">${value}${extra}</td>`;
        }

        let html = '';
        for (let n = 1; n <= 21; n++) {
            html += `<tr class="${[1, 4, 7].includes((n - 1) % 8) ? 'h-[13px]' : 'h-[14px]'}">` + rowHead(n);
            columns.forEach((c, i) => {
                if (n === 1 && i < 7) html += headCell(fields[i]);
                else if (n < 9 && i < 7) html += dataCell(data[n - 2][i], n, i);
                else html += '<td class="p-0 border-r border-b border-[#ebebeb]"></td>';
            });
            html += '</tr>';
        }
        document.getElementById('rows').innerHTML = html;
    </script>

</body>

</html>
